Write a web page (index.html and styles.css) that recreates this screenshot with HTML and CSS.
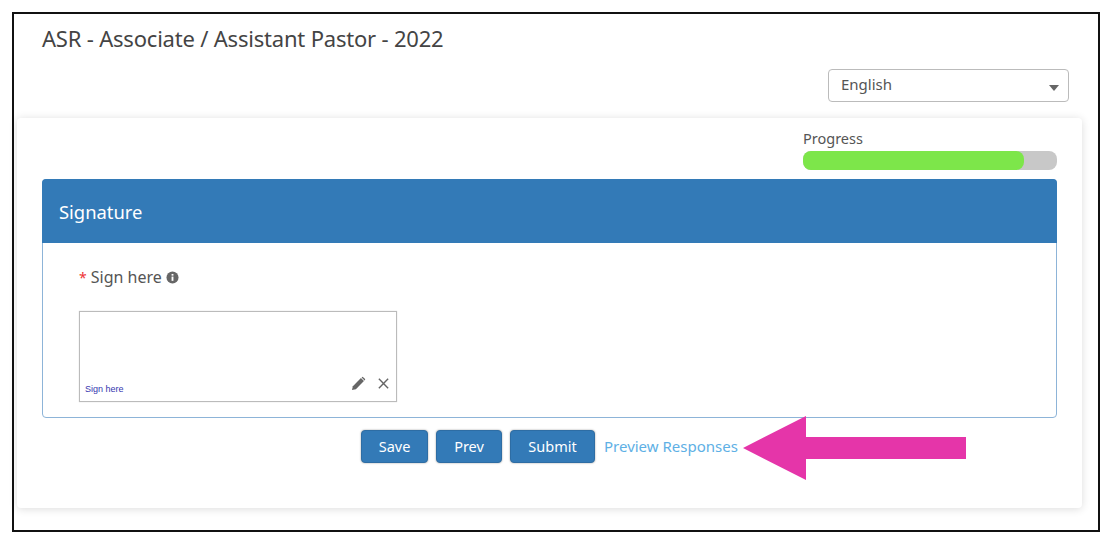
FILE: index.html
```html
<!DOCTYPE html>
<html lang="en">

<head>
  <meta charset="UTF-8" />
  <title>ASR - Associate / Assistant Pastor - 2022</title>
  <link rel="stylesheet" href="styles.css">
</head>

<body>
  <div class="frame">
    <h1>ASR - Associate / Assistant Pastor - 2022</h1>

    <div class="lang-row">
      <div class="select">
        <span>English</span>
        <span class="caret"></span>
      </div>
    </div>

    <section class="card">
      <div class="progress-row">
        <div class="progress">
          <div class="progress-label">Progress</div>
          <div class="progress-track">
            <div class="progress-fill"></div>
          </div>
        </div>
      </div>

      <div class="panel">
        <div class="panel-head">Signature</div>
        <div class="panel-body">
          <div class="field-label">
            <span class="req">*</span> Sign here
            <svg class="info" viewBox="0 0 14 14" width="13" height="13">
              <circle cx="7" cy="7" r="6.5" fill="#666" />
              <rect x="6" y="6" width="2" height="4.6" fill="#fff" />
              <rect x="6" y="3.2" width="2" height="1.8" fill="#fff" />
            </svg>
          </div>
          <div class="sign-box">
            <span class="sign-hint">Sign here</span>
            <div class="sign-tools">
              <svg viewBox="0 0 16 16" width="15" height="15">
                <path d="M1 15l1-4.2L10.6 2.2l3.2 3.2L5.200 14z" fill="#666" />
                <path d="M11.600 1.200a1 1 0 0 1 1.400 0l1.800 1.800a1 1 0 0 1 0 1.400l-.3.300-3.200-3.200z" fill="#666" />
              </svg>
              <svg viewBox="0 0 14 14" width="13" height="13">
                <path d="M2 2l10 10M12 2L2 12" stroke="#666" stroke-width="1.500" fill="none" />
              </svg>
            </div>
          </div>
        </div>
      </div>

      <div class="actions">
        <button class="btn btn-save">Save</button>
        <button class="btn btn-prev">Prev</button>
        <button class="btn btn-submit">Submit</button>
        <a class="preview" href="#">Preview Responses</a>
      </div>
    </section>

    <svg class="arrow" viewBox="0 0 223 64" width="223" height="64">
      <path d="M0 32L63 0V21H223V43H63V64z" fill="#e535a9" />
    </svg>
  </div>
</body>

</html>
```

FILE: styles.css
```css
* {
  box-sizing: border-box;
}

html,
body {
  height: 100%;
}

body {
  margin: 0;
  background: white;
  font-family: "Noto Sans", Arial, sans-serif;
  color: #555;
  overflow: hidden;
}

.frame {
  position: relative;
  width: 1088px;
  height: 520px;
  margin: 12px 0 0 12px;
  border: 2px solid #111;
  padding: 0 16px 0 3px;
}

h1 {
  margin: 0;
  padding: 9px 0 0 25px;
  height: 55px;
  font-size: 22px;
  line-height: 30px;
  font-weight: 400;
  color: #444;
  letter-spacing: -0.2px;
}

.lang-row {
  display: flex;
  justify-content: flex-end;
  margin-right: 13px;
}

.select {
  display: flex;
  align-items: center;
  justify-content: space-between;
  width: 241px;
  height: 33px;
  padding: 0 9px 3px 12px;
  border: 1px solid #bbb;
  border-radius: 4px;
  font-size: 15px;
  color: #555;
}

.caret {
  width: 0;
  height: 0;
  margin-top: 7px;
  border-left: 5.5px solid transparent;
  border-right: 5.5px solid transparent;
  border-top: 6px solid #666;
}

.card {
  height: 390px;
  margin-top: 16px;
  padding: 10px 25px 0;
  background: white;
  border-radius: 4px;
  box-shadow: 0 1px 8px rgba(0, 0, 0, 0.14);
}

.progress-row {
  display: flex;
  justify-content: flex-end;
}

.progress {
  width: 254px;
}

.progress-label {
  margin-bottom: 3px;
  font-size: 14.500px;
  line-height: 20px;
  color: #555;
}

.progress-track {
  height: 19px;
  background: #c8c8c8;
  border-radius: 8px;
}

.progress-fill {
  width: 221px;
  height: 100%;
  background: #7de64a;
  border-radius: 8px;
}

.panel {
  margin-top: 9px;
  height: 239px;
  border: 1px solid #8db4d8;
  border-radius: 4px;
}

.panel-head {
  height: 64px;
  margin: -1px -1px 0;
  padding: 0 17px;
  background: #337ab7;
  border-radius: 4px 4px 0 0;
  color: white;
  font-size: 18.400px;
  line-height: 66px;
}

.panel-body {
  padding: 22px 36px 0;
}

.field-label {
  display: flex;
  align-items: center;
  gap: 4px;
  height: 24px;
  font-size: 16px;
  color: #555;
}

.req {
  color: #e33;
  font-size: 14px;
}

.sign-box {
  display: flex;
  align-items: flex-end;
  justify-content: space-between;
  width: 318px;
  height: 91px;
  margin-top: 22px;
  padding: 0 6px 10px 5px;
  border: 1px solid #bbb;
  box-shadow: 0 0 1px rgba(0, 0, 0, 0.2);
}

.sign-hint {
  font-family: "Liberation Sans", Arial, sans-serif;
  font-size: 9px;
  line-height: 10px;
  margin-bottom: -3px;
  color: #3636b0;
}

.sign-tools {
  display: flex;
  align-items: center;
  gap: 11px;
}

.actions {
  display: flex;
  align-items: center;
  justify-content: flex-start;
  margin-top: 12px;
  padding-left: 319px;
}

.btn {
  height: 33px;
  margin-right: 8px;
  padding: 0 0 2px;
  background: #337ab7;
  border: 1px solid #2e6da4;
  border-radius: 4px;
  color: white;
  font-family: inherit;
  font-size: 14.500px;
  box-shadow: 0 0 2px rgba(0, 0, 0, 0.4);
}

.btn-save {
  width: 67px;
}

.btn-prev {
  width: 66px;
}

.btn-submit {
  width: 85px;
}

.preview {
  margin-left: 1px;
  padding-bottom: 2px;
  color: #5eb0e5;
  font-size: 15px;
  text-decoration: none;
}

/* annotation on top of the screenshot */
.arrow {
  position: absolute;
  left: 729px;
  top: 402px;
}
```
